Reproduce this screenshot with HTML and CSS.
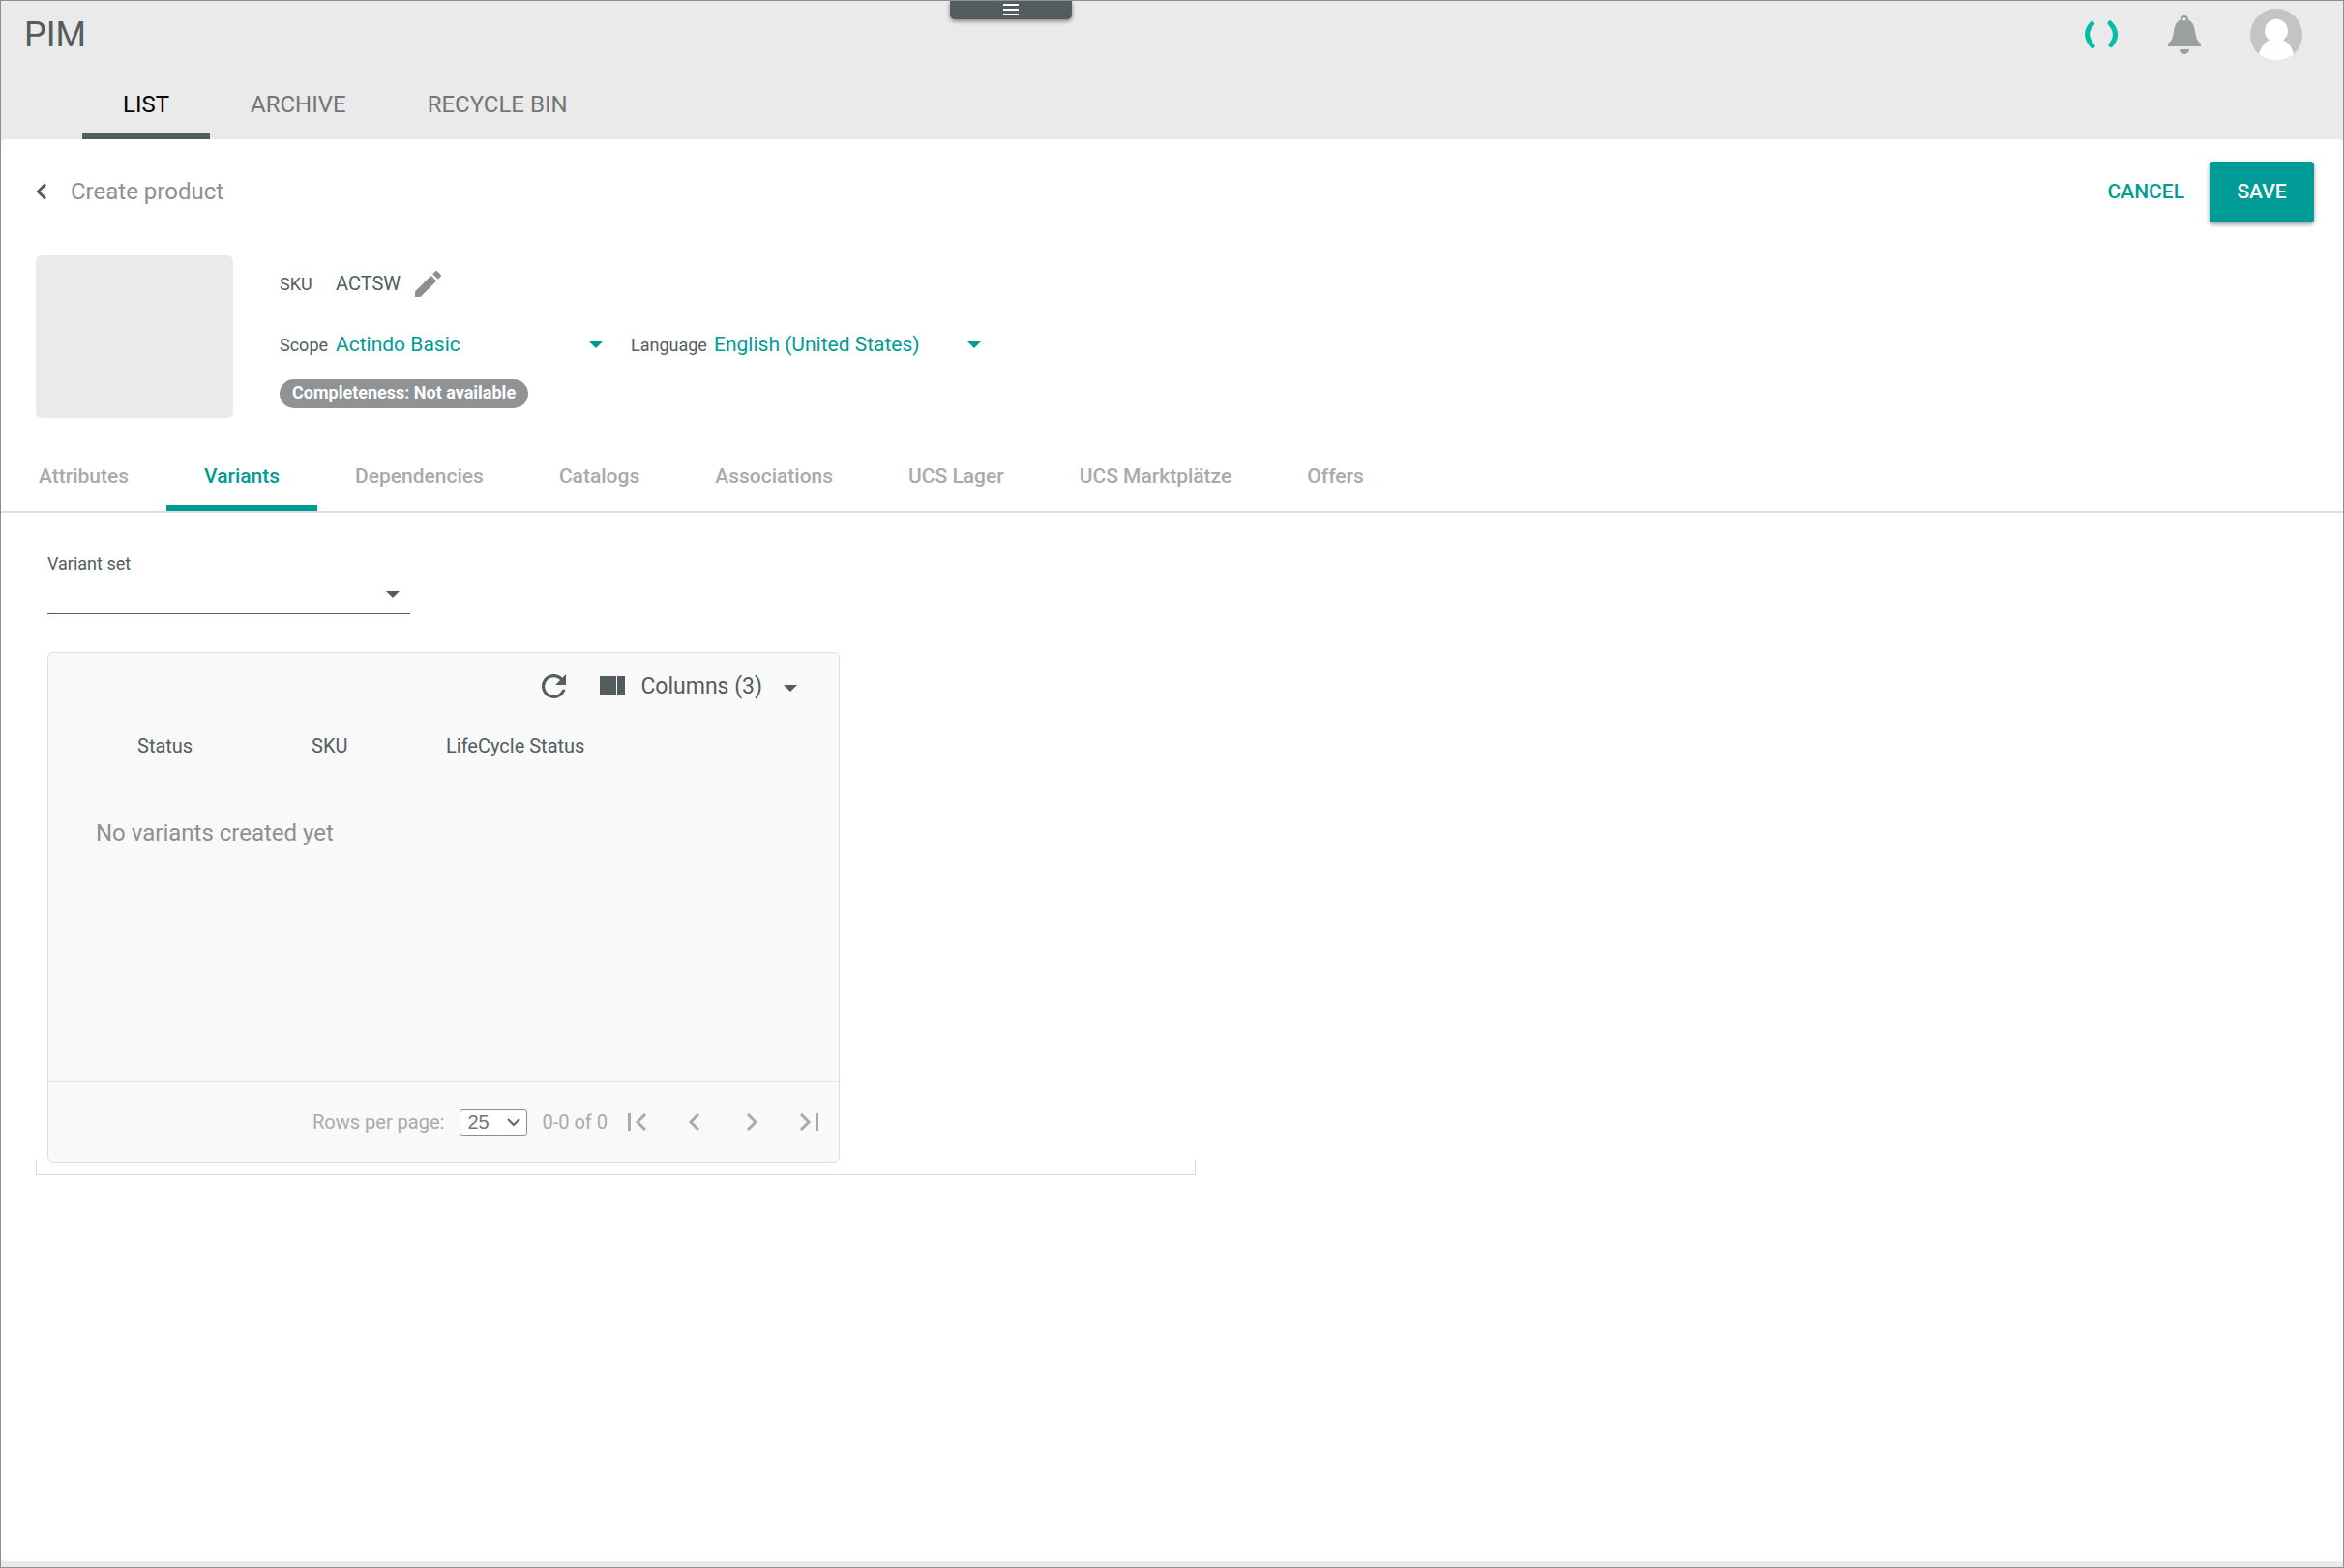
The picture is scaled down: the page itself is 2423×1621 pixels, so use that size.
FILE: index.html
```html
<!DOCTYPE html>
<html lang="en">
<head>
<meta charset="utf-8">
<meta name="viewport" content="width=device-width, initial-scale=1">
<title>PIM</title>
<link rel="stylesheet" href="styles.css">
</head>
<body>
<button class="menu-handle" type="button" aria-label="Menu">
  <svg width="16" height="12" viewBox="0 0 16 12"><path d="M0 1h16M0 6h16M0 11h16" stroke="#fff" stroke-width="2"/></svg>
</button>

<header class="app-header">
  <div class="app-bar">
    <h1 class="app-title">PIM</h1>
    <div class="app-actions">
      <svg class="loader" width="36" height="32" viewBox="0 0 36 32" fill="none" stroke="#00bfa5" stroke-width="5" stroke-linecap="round"><path d="M8.500 4.500Q-1.500 15 9 27.500M27 4Q37.500 15 28 26.500"/></svg>
      <button class="icon-button" type="button" aria-label="Notifications">
        <svg width="34" height="40" viewBox="0 0 34 40" fill="#9aa0a0"><path fill-rule="evenodd" d="M17 0a4 4 0 0 1 4 4.500c4.500 2 6 6 7 12 1.200 7 2 10 6 12.500V32H0v-3c4-2.500 4.800-5.500 6-12.500 1-6 2.500-10 7-12A4 4 0 0 1 17 0zm0 2.200a1.700 1.700 0 1 0 0 3.400 1.700 1.700 0 0 0 0-3.400zM12 35h10a5 5 0 0 1-10 0z"/></svg>
      </button>
      <button class="icon-button" type="button" aria-label="Account">
        <svg width="54" height="54" viewBox="0 0 54 54"><circle cx="27" cy="27" r="27" fill="#c4c4c4"/><path d="M9 47c2-7 5.500-12 11-14.500A12 12 0 1 1 34 32.500C39.500 35 43.500 40 45 47A27 27 0 0 1 9 47z" fill="#fff"/></svg>
      </button>
    </div>
  </div>
  <nav class="main-tabs">
    <a class="main-tab active" href="#list">LIST</a>
    <a class="main-tab" href="#archive">ARCHIVE</a>
    <a class="main-tab" href="#recycle">RECYCLE BIN</a>
  </nav>
</header>

<main class="panel">
  <div class="page-bar">
    <button class="icon-button" type="button" aria-label="Back">
      <svg width="12" height="18" viewBox="0 0 12 18"><path d="M10 1.500 2.500 9l7.500 7.500" fill="none" stroke="#535d5f" stroke-width="3"/></svg>
    </button>
    <h2 class="page-title">Create product</h2>
    <button class="text-button" type="button">CANCEL</button>
    <button class="save-button" type="button">SAVE</button>
  </div>

  <section class="product">
    <div class="thumbnail"></div>
    <div class="details">
      <div class="sku-row">
        <span class="sku-label">SKU</span>
        <span class="sku-value">ACTSW</span>
        <button class="icon-button" type="button" aria-label="Edit SKU">
          <svg width="27" height="27" viewBox="3 3 18 18" fill="#8b9192"><path d="M3 17.250V21h3.750L17.810 9.940l-3.750-3.750L3 17.250zM20.710 7.040a1 1 0 0 0 0-1.410l-2.340-2.340a1 1 0 0 0-1.410 0l-1.830 1.830 3.750 3.750 1.830-1.830z"/></svg>
        </button>
      </div>
      <div class="locale-row">
        <label for="scope">Scope</label>
        <span class="select-wrap accent"><select id="scope"><option>Actindo Basic</option></select></span>
        <label class="language-label" for="language">Language</label>
        <span class="select-wrap accent"><select id="language"><option>English (United States)</option></select></span>
      </div>
      <span class="badge">Completeness: Not available</span>
    </div>
  </section>

  <nav class="sub-tabs">
    <a class="sub-tab" href="#attributes">Attributes</a>
    <a class="sub-tab active" href="#variants">Variants</a>
    <a class="sub-tab" href="#dependencies">Dependencies</a>
    <a class="sub-tab" href="#catalogs">Catalogs</a>
    <a class="sub-tab" href="#associations">Associations</a>
    <a class="sub-tab" href="#lager">UCS Lager</a>
    <a class="sub-tab" href="#marktplaetze">UCS Marktplätze</a>
    <a class="sub-tab" href="#offers">Offers</a>
  </nav>

  <section class="variants">
    <div class="variant-set">
      <label for="variant-set">Variant set</label>
      <span class="select-wrap"><select id="variant-set"><option></option></select></span>
    </div>

    <div class="grid-card">
      <div class="grid-toolbar">
        <button class="icon-button" type="button" aria-label="Refresh">
          <svg width="25" height="25" viewBox="4 4 16 16" fill="#535d5f"><path d="M17.650 6.350A8 8 0 1 0 19.730 14h-2.080A6 6 0 1 1 12 6c1.660 0 3.140.690 4.220 1.780L13 11h7V4l-2.350 2.350z"/></svg>
        </button>
        <button class="columns-button" type="button">
          <svg width="26" height="20" viewBox="0 0 26 20" fill="#535d5f"><path d="M0 0h8v20H0zM9 0h8v20H9zM18 0h8v20h-8z"/></svg>
          <span>Columns (3)</span>
          <span class="caret"></span>
        </button>
      </div>
      <table class="grid">
        <thead>
          <tr><th class="col-status">Status</th><th class="col-sku">SKU</th><th>LifeCycle Status</th></tr>
        </thead>
        <tbody>
          <tr><td colspan="3">No variants created yet</td></tr>
        </tbody>
      </table>
      <div class="pager">
        <label for="rows">Rows per page:</label>
        <span class="rows-wrap">
          <select id="rows"><option>25</option></select>
          <svg class="chevron" width="14" height="9" viewBox="0 0 14 9"><path d="M1 1l6 6 6-6" fill="none" stroke="#666" stroke-width="2"/></svg>
        </span>
        <span class="range">0-0 of 0</span>
        <div class="pager-buttons">
          <button class="icon-button" type="button" aria-label="First page"><svg width="20" height="18" viewBox="0 0 20 18"><path d="M1.500 0v18M18 1l-8 8 8 8"/></svg></button>
          <button class="icon-button" type="button" aria-label="Previous page"><svg width="20" height="18" viewBox="0 0 20 18"><path d="M14 1 6 9l8 8"/></svg></button>
          <button class="icon-button" type="button" aria-label="Next page"><svg width="20" height="18" viewBox="0 0 20 18"><path d="M6 1l8 8-8 8"/></svg></button>
          <button class="icon-button" type="button" aria-label="Last page"><svg width="20" height="18" viewBox="0 0 20 18"><path d="M18.500 0v18M2 1l8 8-8 8"/></svg></button>
        </div>
      </div>
    </div>
    <div class="frame-foot"></div>
  </section>
</main>
</body>
</html>
```
FILE: styles.css
```css
* { box-sizing: border-box; }

body {
  margin: 0;
  min-height: 100vh;
  display: flex;
  flex-direction: column;
  position: relative;
  padding-bottom: 6px;
  border: 1px solid #8f8f8f;
  background: #eaeaea;
  color: #535d5f;
  font-family: Roboto, "Liberation Sans", sans-serif;
  font-size: 18px;
}

h1, h2 { margin: 0; font-weight: 400; }
a { color: inherit; text-decoration: none; }
svg { display: block; flex: none; }

button {
  margin: 0;
  padding: 0;
  border: 0;
  background: none;
  color: inherit;
  font: inherit;
  cursor: pointer;
}

select {
  appearance: none;
  width: 100%;
  margin: 0;
  padding: 0;
  border: 0;
  border-radius: 0;
  background: none;
  color: inherit;
  font: inherit;
}

.menu-handle {
  position: absolute;
  top: 0;
  left: 40.5%;
  width: 126px;
  height: 19px;
  display: flex;
  justify-content: center;
  padding-top: 3px;
  border-radius: 0 0 5px 5px;
  background: #535d5f;
  box-shadow: 0 2px 4px rgba(0, 0, 0, .45);
}

/* Header */
.app-bar {
  display: flex;
  align-items: center;
  justify-content: space-between;
  height: 70px;
  padding: 0 42px 0 24px;
}
.app-title { font-size: 36px; line-height: 68px; }
.app-actions { display: flex; align-items: center; gap: 51px; }

.main-tabs { display: flex; padding-left: 84px; }
.main-tab {
  height: 73px;
  padding: 0 42px;
  border-bottom: 6px solid transparent;
  color: #757575;
  font-size: 24px;
  line-height: 75px;
}
.main-tab.active { border-color: #535d5f; color: #000; }

/* Main panel */
.panel { flex: 1; border-radius: 4px; background: #fff; }

.page-bar {
  display: flex;
  align-items: center;
  height: 108px;
  padding: 0 30px 0 36px;
}
.page-title {
  flex: 1;
  padding-left: 24px;
  color: #8b9192;
  font-size: 24px;
}
.text-button {
  padding: 0 26px;
  color: #009b95;
  font-size: 21px;
  font-weight: 500;
}
.save-button {
  height: 63px;
  padding: 0 28px;
  min-width: 108px;
  border-radius: 4px;
  background: #009b95;
  box-shadow: 0 2px 4px rgba(0, 0, 0, .4);
  color: #fff;
  font-size: 21px;
  font-weight: 500;
}

.product { display: flex; gap: 48px; padding: 12px 36px; }
.thumbnail { width: 204px; height: 168px; border-radius: 6px; background: #eaeaea; }

.details { display: flex; flex-direction: column; align-items: flex-start; }
.sku-row { display: flex; align-items: center; height: 58px; }
.sku-label { width: 58px; }
.sku-value { padding-right: 15px; font-size: 20px; }

.locale-row { display: flex; align-items: baseline; height: 70px; line-height: 70px; }
.locale-row label { width: 58px; }
.locale-row .language-label { width: 87px; padding-left: 1px; }

.select-wrap { display: block; position: relative; }
.select-wrap::after,
.caret {
  border: 7px solid transparent;
  border-top-color: #535d5f;
  border-bottom: 0;
}
.select-wrap::after {
  content: "";
  position: absolute;
  top: 50%;
  right: 11px;
  margin-top: -3px;
  pointer-events: none;
}
.accent { width: 304px; color: #009b95; font-size: 21px; line-height: 32px; }
.accent::after { right: 28px; border-top-color: #009b95; }

.badge {
  height: 30px;
  padding: 0 13px;
  border-radius: 15px;
  background: #8f9395;
  color: #fff;
  font-weight: 700;
  line-height: 28px;
}

/* Product tabs */
.sub-tabs { display: flex; border-bottom: 2px solid #dcdcdc; }
.sub-tab {
  height: 84px;
  padding: 0 39px;
  border-bottom: 6px solid transparent;
  color: #a6abab;
  font-size: 21px;
  font-weight: 500;
  line-height: 96px;
}
.sub-tab.active { border-color: #009b95; color: #009b95; }

/* Variants */
.variants { padding: 42px 36px; }
.variant-set { width: 375px; margin-left: 12px; }
.variant-set label { display: block; line-height: 21px; }
.variant-set select { display: block; height: 42px; border-bottom: 1px solid #535d5f; }

.grid-card {
  max-width: 819px;
  margin: 39px 0 0 12px;
  border: 1px solid #dcdcdc;
  border-radius: 6px;
  background: #f9f9f9;
}
.grid-toolbar {
  display: flex;
  align-items: center;
  justify-content: flex-end;
  gap: 35px;
  height: 68px;
  padding-right: 43px;
}
.columns-button { display: flex; align-items: center; gap: 16px; font-size: 23px; }
.caret { margin: 4px 0 0 6px; }

.grid { width: 100%; border-collapse: collapse; table-layout: fixed; }
.grid th {
  height: 60px;
  padding: 0 0 4px 92px;
  font-size: 20px;
  font-weight: 400;
  text-align: left;
}
.grid .col-status { width: 229px; }
.grid .col-sku { width: 139px; padding-left: 43px; }
.grid th:last-child { padding-left: 43px; }
.grid td {
  height: 315px;
  padding: 44px 0 0 49px;
  color: #8b9192;
  font-size: 24px;
  vertical-align: top;
}

.pager {
  display: flex;
  align-items: center;
  height: 83px;
  padding: 0 21px 0 273px;
  border-top: 1px solid #e6e6e6;
  color: #a6abab;
  font-size: 20px;
}
.rows-wrap { position: relative; width: 70px; margin: 0 15px 0 auto; }
.rows-wrap select {
  display: block;
  height: 27px;
  padding-left: 7px;
  border: 1px solid #8f8f8f;
  border-radius: 3px;
  background: #fff;
  color: #757575;
  font-family: "Liberation Sans", Arial, sans-serif;
  font-size: 20px;
}
.rows-wrap .chevron { position: absolute; top: 9px; right: 7px; pointer-events: none; }
.pager-buttons { display: flex; gap: 39px; margin-left: 21px; }
.pager-buttons path { fill: none; stroke: #a6abab; stroke-width: 3; }

.frame-foot {
  max-width: 1199px;
  height: 16px;
  margin-top: -3px;
  border: 1px solid #dcdcdc;
  border-top: 0;
}
```
